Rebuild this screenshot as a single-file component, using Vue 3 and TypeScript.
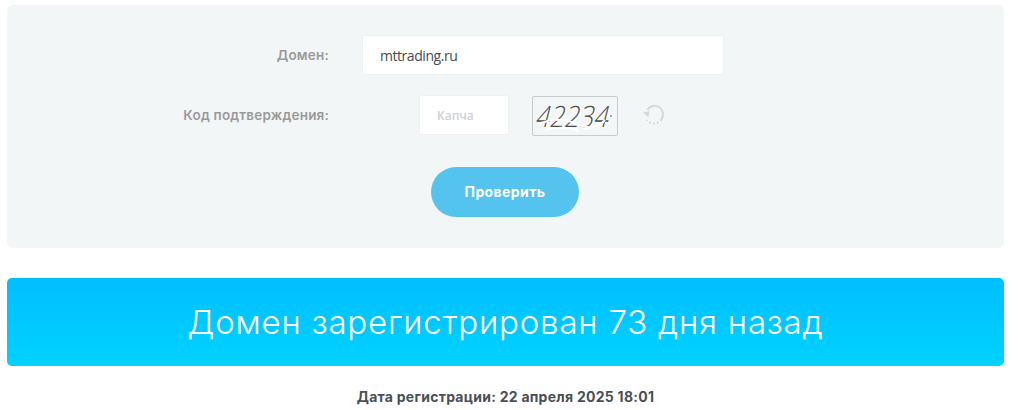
<script setup lang="ts">
const domain = 'mttrading.ru'
</script>

<template>
  <main class="page">
    <form class="panel" @submit.prevent>
      <div class="row">
        <label class="label" for="domain">Домен:</label>
        <input id="domain" class="input domain" :value="domain" />
      </div>
      <div class="row captcha-row">
        <label class="label" for="captcha">Код подтверждения:</label>
        <div class="captcha">
          <input id="captcha" class="input code" placeholder="Капча" />
          <div class="captcha-img">
            <svg width="84" height="38" viewBox="0 0 84 38">
              <g transform="translate(9 0) skewX(-14) scale(0.9 1.05)">
                <text x="2" y="30" class="cap-ghost">42234</text>
                <text x="0" y="28.5" class="cap-text">42234</text>
              </g>
              <path d="M8 26 Q26 19 44 27 T72 23" class="cap-cut" />
              <path d="M12 33 Q30 28 46 34" class="cap-cut" />
              <path d="M77 19 h2" class="cap-dot" />
            </svg>
          </div>
          <svg class="refresh" width="24" height="24" viewBox="0 0 24 24" aria-label="Обновить">
            <path d="M5.3 6.8 A8.5 8.5 0 1 1 19.3 16.4" class="ref-solid" />
            <path d="M19.3 16.4 A8.5 8.5 0 0 1 5 17" class="ref-dot" />
            <path d="M1 9.5 L7.5 8 L6.5 14.5 Z" class="ref-head" />
          </svg>
        </div>
      </div>
      <button class="submit" type="submit">Проверить</button>
    </form>

    <section class="banner">Домен зарегистрирован 73 дня назад</section>

    <p class="date">Дата регистрации: 22 апреля 2025 18:01</p>
  </main>
</template>

<style scoped>
.page {
  width: 997px;
  margin-left: 7px;
  padding-top: 5px;
  font-family: Inter, "Noto Sans", sans-serif;
}
.panel {
  height: 243px;
  box-sizing: border-box;
  padding-top: 30px;
  background: #f3f6f7;
  border-radius: 6px;
  display: flex;
  flex-direction: column;
}
.row {
  display: flex;
  align-items: center;
  height: 40px;
}
.captcha-row {
  margin-top: 20px;
}
.label {
  width: 322px;
  margin-right: 33px;
  text-align: right;
  font-size: 13.5px;
  font-weight: 600;
  letter-spacing: 0.2px;
  color: #9a9a9a;
}
.input {
  box-sizing: border-box;
  height: 40px;
  border: 1px solid #eef1f3;
  border-radius: 2px;
  background: #fff;
  outline: none;
  font-family: "Open Sans", sans-serif;
  color: #444b54;
}
.domain {
  width: 362px;
  padding: 0 17px;
  font-size: 14px;
  letter-spacing: -0.45px;
}
.captcha {
  display: flex;
  align-items: center;
}
.code {
  width: 90px;
  margin-left: 57px;
  padding: 0 17px;
  font-size: 12px;
  font-weight: 600;
}
.code::placeholder {
  color: #cdd1d6;
  opacity: 1;
}
.captcha-img {
  box-sizing: border-box;
  width: 86px;
  height: 40px;
  margin: 2px 0 0 23px;
  border: 1px solid #c9cccf;
  border-radius: 2px;
}
.captcha-img svg {
  display: block;
  overflow: visible;
}
.cap-text,
.cap-ghost {
  font-family: "Open Sans", sans-serif;
  font-weight: 300;
  font-size: 28px;
  letter-spacing: 0.2px;
}
.cap-text {
  fill: #4a4d50;
}
.cap-ghost {
  fill: #fff;
}
.cap-cut {
  fill: none;
  stroke: #fff;
  stroke-width: 2;
}
.cap-dot {
  fill: none;
  stroke: #55585b;
  stroke-width: 1.2;
}
.refresh {
  margin-left: 24px;
  flex: none;
}
.ref-solid {
  fill: none;
  stroke: #d3d8dc;
  stroke-width: 2;
}
.ref-dot {
  fill: none;
  stroke: #cdd2d6;
  stroke-width: 2;
  stroke-dasharray: 1.5 2.5;
}
.ref-head {
  fill: #d3d8dc;
}
.submit {
  align-self: center;
  width: 148px;
  height: 50px;
  margin: 32px 1px 0 0;
  border: none;
  border-radius: 25px;
  background: #54c3ed;
  color: #fff;
  font-family: Inter, sans-serif;
  font-size: 14px;
  font-weight: 700;
  letter-spacing: 0.4px;
  padding-bottom: 3px;
}
.banner {
  height: 88px;
  margin-top: 30px;
  border-radius: 5px;
  background: linear-gradient(to bottom, #00bfff, #00d2ff);
  color: #fff;
  font-size: 33px;
  font-weight: 350;
  letter-spacing: 0.8px;
  display: flex;
  align-items: center;
  justify-content: center;
}
.date {
  margin: 22px 0 0;
  text-align: center;
  font-size: 14px;
  font-weight: 700;
  letter-spacing: 0.26px;
  color: #4a5056;
}
</style>
